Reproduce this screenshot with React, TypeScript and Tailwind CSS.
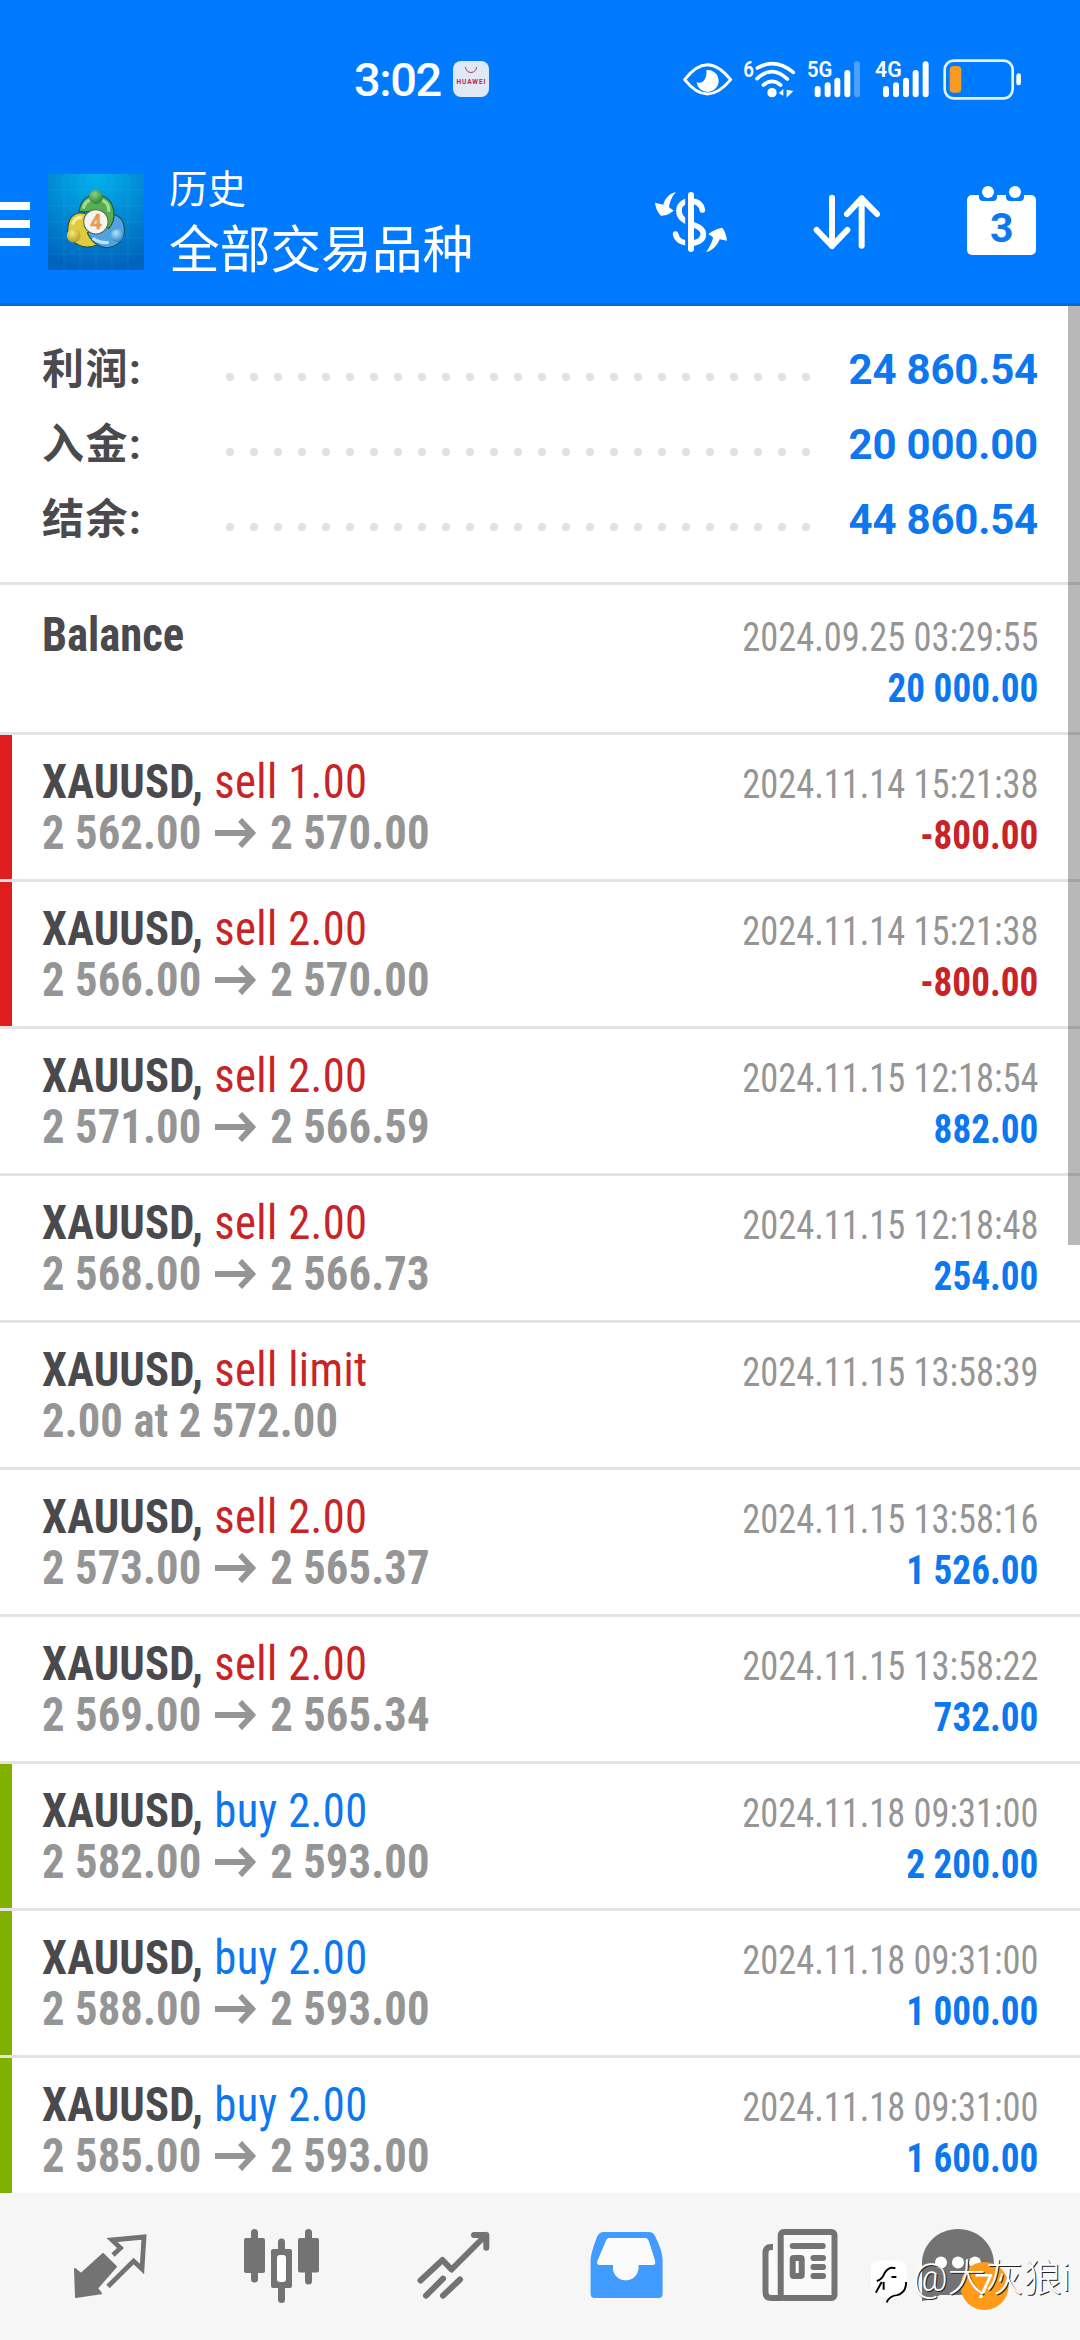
type Deal = {
  side: 'sell' | 'buy';
  volume: string;
  detail: [string, string?];
  time: string;
  profit?: string;
  mark?: 'sl' | 'tp';
};

const summary = [
  { label: '利润:', value: '24 860.54' },
  { label: '入金:', value: '20 000.00' },
  { label: '结余:', value: '44 860.54' },
];

const deals: Deal[] = [
  { side: 'sell', volume: '1.00', detail: ['2 562.00', '2 570.00'], time: '2024.11.14 15:21:38', profit: '-800.00', mark: 'sl' },
  { side: 'sell', volume: '2.00', detail: ['2 566.00', '2 570.00'], time: '2024.11.14 15:21:38', profit: '-800.00', mark: 'sl' },
  { side: 'sell', volume: '2.00', detail: ['2 571.00', '2 566.59'], time: '2024.11.15 12:18:54', profit: '882.00' },
  { side: 'sell', volume: '2.00', detail: ['2 568.00', '2 566.73'], time: '2024.11.15 12:18:48', profit: '254.00' },
  { side: 'sell', volume: 'limit', detail: ['2.00 at 2 572.00'], time: '2024.11.15 13:58:39' },
  { side: 'sell', volume: '2.00', detail: ['2 573.00', '2 565.37'], time: '2024.11.15 13:58:16', profit: '1 526.00' },
  { side: 'sell', volume: '2.00', detail: ['2 569.00', '2 565.34'], time: '2024.11.15 13:58:22', profit: '732.00' },
  { side: 'buy', volume: '2.00', detail: ['2 582.00', '2 593.00'], time: '2024.11.18 09:31:00', profit: '2 200.00', mark: 'tp' },
  { side: 'buy', volume: '2.00', detail: ['2 588.00', '2 593.00'], time: '2024.11.18 09:31:00', profit: '1 000.00', mark: 'tp' },
  { side: 'buy', volume: '2.00', detail: ['2 585.00', '2 593.00'], time: '2024.11.18 09:31:00', profit: '1 600.00', mark: 'tp' },
];

function StatusBar() {
  return (
    <div className="flex h-[144px] items-start pt-[56px] text-white">
      <span className="ml-[354px] w-[99px] text-[47px] leading-[47px] font-medium tracking-[-1.4px]">3:02</span>
      <svg className="mt-[5px]" width="36" height="36" viewBox="0 0 36 36">
        <rect width="36" height="36" rx="8" fill="#dfe8f5" />
        <path d="M12.500 6a5.500 5.500 0 0 0 11 0" fill="none" stroke="#b04068" strokeWidth="1" />
        <text x="3.500" y="23" fontSize="6.500" fontWeight="700" textLength="29" fill="#c0204a">HUAWEI</text>
      </svg>
      <div className="mt-[1px] ml-[193px] flex">
        {/* Eye comfort */}
        <svg width="58" height="46.670" viewBox="36 50 174 140">
          <path d="M44 118Q78 73 112 73Q146 73 182 118Q146 161 112 161Q78 161 44 118Z" fill="none" stroke="#fff" strokeWidth="9" strokeLinejoin="round" />
          <path d="M109 89a33 33 0 1 1-29 36q10 6 20-2q12-14 9-34Z" fill="#fff" />
        </svg>
        {/* Wi-Fi 6 */}
        <svg width="63.330" height="46.670" viewBox="210 50 190 140">
          <text x="220" y="110" fontSize="64" fontWeight="600" fill="#fff" textLength="32" lengthAdjust="spacingAndGlyphs">6</text>
          <g fill="none" stroke="#fff" strokeWidth="11" strokeLinecap="round">
            <path d="M262 83Q315 52 370 96" />
            <path d="M261 115Q306 72 352 116" />
            <path d="M280 134Q306 112 332 134" />
          </g>
          <circle cx="306" cy="157" r="14" fill="#fff" />
          <path d="M340 146v20l-14-7zM350 148l20 4-20 20z" fill="#fff" />
        </svg>
        <svg width="66.670" height="46.670" viewBox="400 50 200 140">
          <text x="412" y="111" fontSize="66" fontWeight="600" fill="#fff" textLength="76" lengthAdjust="spacingAndGlyphs">5G</text>
          <g stroke="#fff" strokeWidth="18" strokeLinecap="round">
            <path d="M444 146v16M474 135v27M503 121v41M533 98v64" />
            <path d="M562 72v90" opacity=".3" />
          </g>
        </svg>
        <svg width="66.670" height="46.670" viewBox="600 50 200 140">
          <text x="615" y="111" fontSize="66" fontWeight="600" fill="#fff" textLength="80" lengthAdjust="spacingAndGlyphs">4G</text>
          <path d="M648 146v16M678 135v27M708 121v41M737 98v64M767 72v90" stroke="#fff" strokeWidth="18" strokeLinecap="round" />
        </svg>
        <svg width="86.670" height="46.670" viewBox="800 50 260 140">
          <rect x="823" y="61" width="204" height="113" rx="27" fill="none" stroke="#fff" strokeOpacity=".9" strokeWidth="8" />
          <rect x="838" y="77" width="35" height="80" rx="12" fill="#f89a22" />
          <rect x="1038" y="99" width="14" height="36" rx="7" fill="#fff" />
        </svg>
      </div>
    </div>
  );
}

function AppLogo() {
  return (
    <svg className="ml-[18px]" width="96" height="96" viewBox="0 0 96 96">
      <defs>
        <radialGradient id="sky" cx=".5" cy="0" r="1">
          <stop offset="0" stopColor="#02b2ec" />
          <stop offset="1" stopColor="#0063bd" />
        </radialGradient>
        <radialGradient id="green" cx=".4" cy=".3" r=".8">
          <stop offset="0" stopColor="#8fd07c" />
          <stop offset="1" stopColor="#1e7a33" />
        </radialGradient>
        <radialGradient id="gold" cx=".4" cy=".3" r=".8">
          <stop offset="0" stopColor="#f7e878" />
          <stop offset="1" stopColor="#a8931c" />
        </radialGradient>
        <radialGradient id="azure" cx=".4" cy=".3" r=".8">
          <stop offset="0" stopColor="#b4e2fb" />
          <stop offset="1" stopColor="#2179c4" />
        </radialGradient>
      </defs>
      <rect width="96" height="96" fill="url(#sky)" />
      <path d="M16 0v96M32 0v96M48 0v96M64 0v96M80 0v96M0 16h96M0 32h96M0 48h96M0 64h96M0 80h96" stroke="#5cc4f5" strokeOpacity=".14" />
      <g transform="translate(-3 -2.500) scale(1.060)">
        <g stroke="#1c4f4a" strokeWidth="1">
          <path d="M22 62Q19 40 34 39Q42 39 45 50L51 68Q36 77 22 62Z" fill="#dfcb3c" />
          <path d="M74 62Q78 44 64 40L40 58Q46 71 59 72Q69 71 74 62Z" fill="#4fa3e0" />
          <path d="M32 38Q34 23 48 22Q63 23 65 38Q66 47 60 54L48 38Z" fill="#58ad50" />
        </g>
        <path d="M45 63Q52 68 60 67" fill="none" stroke="#bfe4fa" strokeWidth="3" />
        <path d="M26 50Q28 43 35 43" fill="none" stroke="#f8f0a0" strokeWidth="3" />
        <path d="M36 35Q38 27 44 27M54 27Q61 30 60 38" fill="none" stroke="#a4db94" strokeWidth="3" />
        <circle cx="48" cy="24" r="6.500" fill="url(#green)" />
        <circle cx="27" cy="60.500" r="6.500" fill="url(#gold)" />
        <circle cx="68" cy="60.500" r="6" fill="url(#azure)" />
        <circle cx="48" cy="47.500" r="11.500" fill="#f6f4f1" stroke="#4b6a50" strokeWidth="1" />
        <text x="48" y="54.500" textAnchor="middle" fontSize="19" fontWeight="500" fill="#f2a266" stroke="#e58a4a" strokeWidth=".6">4</text>
      </g>
    </svg>
  );
}

function Toolbar() {
  return (
    <div className="flex h-[162px] items-center border-b-3 border-[#0c68d2] pr-[42px] pb-[3px] text-white">
      <div className="mt-[4px] flex w-[30px] flex-col gap-[10px]">
        <span className="h-[8px] bg-white" />
        <span className="h-[8px] bg-white" />
        <span className="h-[8px] bg-white" />
      </div>
      <AppLogo />
      <div className="mt-[2px] ml-[25px] flex flex-col gap-[7px]">
        <span className="text-[38.500px] leading-[48px]">历史</span>
        <span className="text-[50.700px] leading-[60px]">全部交易品种</span>
      </div>
      <div className="ml-auto flex items-center gap-[82px]">
        <svg width="76" height="64" viewBox="36 90 228 192">
          <path d="M184 150C180 128 165 123 148 123C128 123 114 134 114 152C114 175 132 182 148 190C170 200 187 205 187 222C187 240 170 248 150 250C125 250 106 240 104 222" fill="none" stroke="#fff" strokeWidth="17" strokeLinecap="round" />
          <path d="M137 90v190" stroke="#007aff" strokeWidth="9" />
          <path d="M150 105v162" stroke="#fff" strokeWidth="18" strokeLinecap="round" />
          <path d="M105 97C92 98 72 112 67 134L42 128C44 145 52 160 60 167C75 168 88 160 98 152L84 142C86 125 95 105 105 97Z" fill="#fff" />
          <path d="M196 276C208 258 216 240 216 232L202 222Q225 205 244 203Q256 220 258 242L236 238C228 258 212 274 196 276Z" fill="#fff" />
        </svg>
        <svg width="72" height="60" viewBox="510 96 216 180" fill="none" stroke="#fff" strokeWidth="18" strokeLinecap="round" strokeLinejoin="round">
          <path d="M573 113v145M527 210l46 48 46-48M662 257V115M618 162l44-47 46 47" />
        </svg>
        <svg className="mt-[-3px]" width="73.330" height="73.330" viewBox="972 72 220 220">
          <rect x="978" y="105" width="207" height="180" rx="15" fill="#fff" />
          <rect x="1014" y="90" width="54" height="33" rx="12" fill="#007aff" />
          <rect x="1095" y="90" width="54" height="33" rx="12" fill="#007aff" />
          <circle cx="1041" cy="96" r="18" fill="#fff" />
          <circle cx="1122" cy="96" r="18" fill="#fff" />
          <text x="1082" y="247" textAnchor="middle" fontSize="123" fontWeight="700" fill="#0c77ee">3</text>
        </svg>
      </div>
    </div>
  );
}

function SummaryRow({ label, value }: { label: string; value: string }) {
  return (
    <div className="flex h-[75px] items-center text-[42px] leading-[75px]">
      <span className="w-[184px] font-bold tracking-[1.5px] text-[#4a4a4e]">{label}</span>
      <div className="mt-[15px] flex w-[584px] justify-between">
        {Array.from({ length: 25 }, (_, i) => (
          <span key={i} className="size-[8px] rounded-full bg-[#e1e1e1]" />
        ))}
      </div>
      <span className="ml-auto font-bold tracking-[-0.2px] text-[#0c77ee]">{value}</span>
    </div>
  );
}

function Arrow() {
  return (
    <svg className="mx-[14px]" width="46" height="30" viewBox="0 0 46 30" fill="none" stroke="#959595" strokeWidth="6">
      <path d="M1 15h40M28 2l13 13-13 13" />
    </svg>
  );
}

function DealRow({ deal }: { deal: Deal }) {
  return (
    <div className="flex h-[147px] shrink-0 border-b-3 border-[#e3e3e3]">
      <div className={`w-[12px] ${deal.mark === 'sl' ? 'bg-[#e01e20]' : deal.mark === 'tp' ? 'bg-[#80b000]' : ''}`} />
      <div className="flex flex-1 justify-between pr-[42px] pl-[30px] leading-[51px] font-stretch-condensed">
        <div className="origin-left scale-x-93 pt-[21px] text-[48px] whitespace-nowrap">
          <div>
            <span className="font-bold tracking-[0.2px] text-[#4a4a4e]">XAUUSD,</span>
            <span className={`ml-[12px] tracking-[0.4px] ${deal.side === 'sell' ? 'text-[#c82428]' : 'text-[#0c77ee]'}`}>
              {deal.side} {deal.volume}
            </span>
          </div>
          <div className="flex items-center font-bold tracking-[0.1px] text-[#959595]">
            {deal.detail[0]}
            {deal.detail[1] && <Arrow />}
            {deal.detail[1]}
          </div>
        </div>
        <div className="pt-[24px] text-right text-[40px]">
          <div className="origin-right scale-x-91 text-[#959595]">{deal.time}</div>
          {deal.profit && (
            <div className={`origin-right scale-x-93 font-bold ${deal.profit.startsWith('-') ? 'text-[#c82428]' : 'text-[#0c77ee]'}`}>
              {deal.profit}
            </div>
          )}
        </div>
      </div>
    </div>
  );
}

function BottomNav() {
  return (
    <nav className="flex h-[147px] items-start bg-[#f6f6f6] px-[24px] pt-[31px] text-[#737373]">
      <div className="flex w-[172px] justify-center">
        <svg width="88" height="80" viewBox="-2 0 88 80">
          <path d="M7 45l6 5 22-20 13 12.700-19 21.600 4 5L8 73z" fill="currentColor" stroke="currentColor" strokeWidth="2" strokeLinejoin="round" />
          <path d="M45 31l7.500-7L44 16l32-3-2 32-8.400-8L40 62.500" fill="none" stroke="currentColor" strokeWidth="4.800" />
        </svg>
      </div>
      <div className="flex w-[172px] justify-center">
        <svg width="88" height="80" viewBox="0 0 88 80">
          <path d="M16.500 8.500V55M43.500 18v57.500M70.500 8.500V57" stroke="currentColor" strokeWidth="7" strokeLinecap="round" />
          <rect x="6" y="14" width="21" height="35" rx="2" fill="currentColor" />
          <rect x="33" y="25" width="21" height="39" rx="2" fill="currentColor" />
          <rect x="39" y="31" width="9" height="27" rx="3" fill="#fff" />
          <rect x="60" y="14" width="21" height="34.500" rx="2" fill="currentColor" />
        </svg>
      </div>
      <div className="flex w-[172px] justify-center">
        <svg width="88" height="80" viewBox="0 0 88 80" fill="none" stroke="currentColor" strokeWidth="6" strokeLinecap="round" strokeLinejoin="round">
          <path d="M10.500 56.500l22-20.500 9 9.500L76 11M64 11h12.300v12.700M16 71.700l17-17M33 71.700L50 55.500" />
        </svg>
      </div>
      <div className="flex w-[172px] justify-center">
        <svg width="88" height="80" viewBox="0 0 88 80">
          <path
            fillRule="evenodd"
            fill="#429bff"
            d="M22 8H67Q71 8 73 12Q80.600 27 80.600 36V70q0 4-4 4H12.600q-4 0-4-4V36Q9 28 15 13Q17 8 22 8ZM28 14Q25 14 24 17L15.500 37Q14.500 41 18 41H31V43.500A12.700 12.700 0 0 0 56.400 43.500V41H70Q74 41 73 37L67 18Q65.500 14 63 14Z"
          />
          <path d="M28 14Q25 14 24 17L15.500 37Q14.500 41 18 41H31V43.500A12.700 12.700 0 0 0 56.400 43.500V41H70Q74 41 73 37L67 18Q65.500 14 63 14Z" fill="#fbfbfb" />
        </svg>
      </div>
      <div className="flex w-[172px] justify-center">
        <svg width="88" height="80" viewBox="0 0 88 80" fill="none" stroke="currentColor" strokeWidth="6">
          <path d="M19 23H17Q11.500 23 11.500 29V68Q11.500 74 17 74H28" fill="#fbfbfb" />
          <rect x="26.700" y="8" width="53.800" height="66" rx="3" fill="#f9f9f9" />
          <path d="M38.700 22h30M59.500 34h9.500M59.500 43h9.500M59.500 52h9.500" strokeLinecap="round" />
          <rect x="38.700" y="34" width="9" height="18" rx="1" fill="#fff" />
        </svg>
      </div>
      <div className="flex w-[172px] justify-center">
        <svg className="overflow-visible" width="88" height="80" viewBox="0 0 88 80">
          <path d="M-4 40C-4 20 12 5 32 5S68 20 68 40S52 71 32 71H14Q6 76-4 77Z" fill="currentColor" />
          <g fill="#fff">
            <circle cx="15" cy="38.500" r="6" />
            <circle cx="32" cy="38.500" r="6" />
            <circle cx="49" cy="38.500" r="6" />
          </g>
          <circle cx="58.500" cy="62" r="24" fill="#ff9b19" />
          <text x="58" y="74" textAnchor="middle" fontSize="34" fill="#fff">7</text>
        </svg>
      </div>
    </nav>
  );
}

function Watermark() {
  return (
    <div className="absolute top-[2252px] left-[868px] flex items-center">
      <svg width="45" height="52" viewBox="0 0 46 52">
        <path d="M3 16Q3 8 14 8H30Q40 8 40 20V34Q39 45 28 46L22 51 20 46 8 44Q3 40 3 30Z" fill="#fff" />
        <path d="M8 41L14 30M9 29Q14 28 17 21Q21 14 28 16M24 25h5M16 38V30M39 30Q39 41 30 43.500Q22 44 19 51" fill="none" stroke="#000" strokeWidth="2" />
      </svg>
      <span className="text-[38px] leading-[52px] font-light whitespace-nowrap text-white [text-shadow:1px_1px_0_#222]">@大灰狼i</span>
    </div>
  );
}

export default function App() {
  return (
    <div className="relative flex h-[2340px] w-[1080px] flex-col overflow-hidden bg-white font-['Roboto','Noto_Sans_CJK_SC',sans-serif]">
      <header className="h-[306px] shrink-0 bg-[#007aff]">
        <StatusBar />
        <Toolbar />
      </header>

      <main className="relative flex h-[1887px] shrink-0 flex-col overflow-hidden">
        <section className="h-[279px] shrink-0 border-b-3 border-[#e3e3e3] px-[42px] pt-[26px]">
          {summary.map(row => (
            <SummaryRow key={row.label} label={row.label} value={row.value} />
          ))}
        </section>

        {/* Initial deposit */}
        <div className="flex h-[150px] shrink-0 justify-between border-b-3 border-[#e3e3e3] px-[42px] pt-[24px] leading-[51px] font-stretch-condensed">
          <span className="origin-left scale-x-93 text-[48px] font-bold text-[#4a4a4e]">Balance</span>
          <div className="text-right text-[40px]">
            <div className="origin-right scale-x-91 pt-[3px] text-[#959595]">2024.09.25 03:29:55</div>
            <div className="origin-right scale-x-93 font-bold text-[#0c77ee]">20 000.00</div>
          </div>
        </div>

        {deals.map((deal, i) => (
          <DealRow key={i} deal={deal} />
        ))}

        {/* Scrollbar thumb */}
        <div className="absolute top-0 right-0 h-[939px] w-[12px] bg-black/28" />
      </main>

      <BottomNav />
      <Watermark />
    </div>
  );
}
